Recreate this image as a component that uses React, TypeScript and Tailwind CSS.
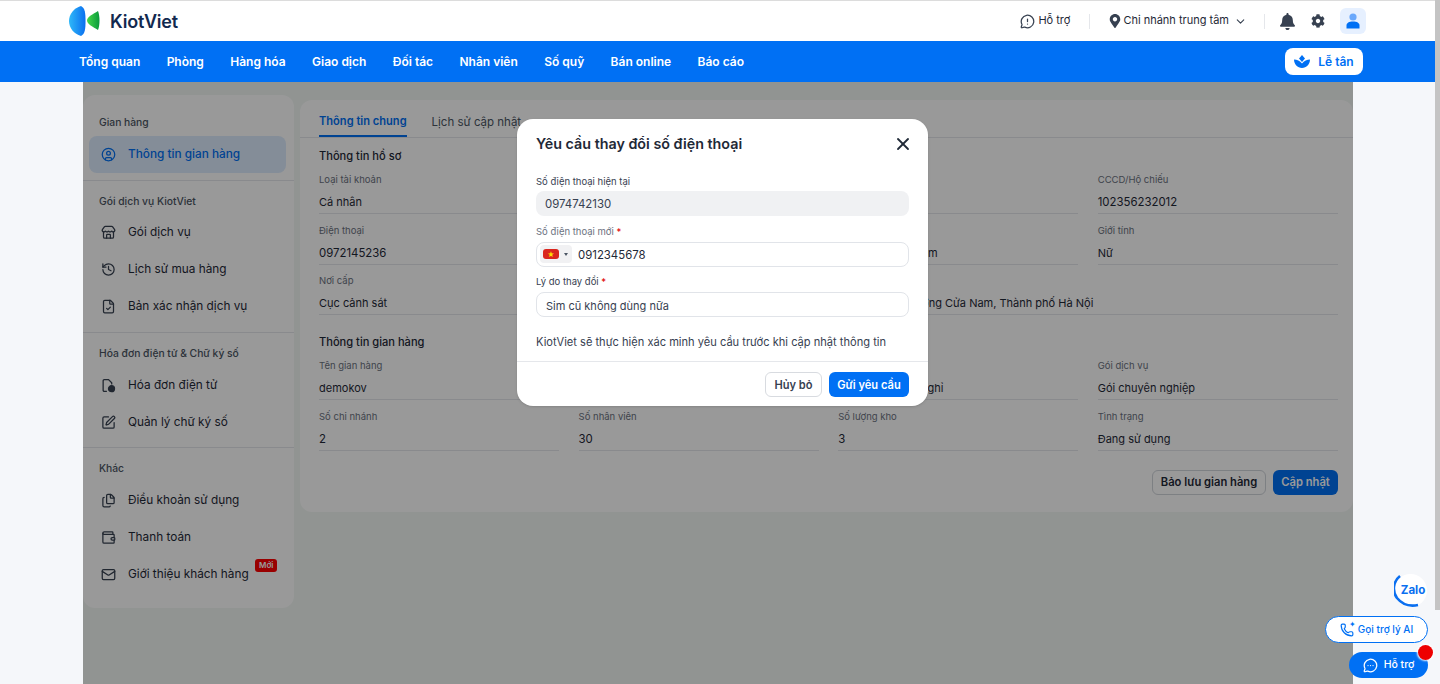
import React from "react";
import { CircleUser, Store, History, FileCheck, SquarePen, Files, Wallet, Mail, ChevronDown, X, Phone, MessageCircleMore, MessageCircleWarning } from "lucide-react";
import { FaBell, FaCog, FaMapMarkerAlt } from "react-icons/fa";

const font = { fontFamily: "Inter, 'Noto Sans', sans-serif" };

function Logo() {
  return (
    <svg width="34" height="32" viewBox="0 0 34 32" className="shrink-0">
      <defs>
        <linearGradient id="lb" x1="0" x2="1" y1="0" y2="0"><stop offset="0" stopColor="#2fb8f8" /><stop offset="1" stopColor="#0a6ff0" /></linearGradient>
        <linearGradient id="lg" x1="0" x2="1" y1="0" y2="0"><stop offset="0" stopColor="#45d84a" /><stop offset="1" stopColor="#0a9a3c" /></linearGradient>
      </defs>
      <path d="M12 1 C5 3 0 9 0 16 C0 23 5 29 12 31 C16 29 16.500 24 16.500 16 C16.500 8 16 3 12 1Z" fill="url(#lb)" />
      <path d="M29 6 C24 9 18 12 18 15.500 C18 19 24 22 29 25 C31 20 31 11 29 6Z" fill="url(#lg)" />
    </svg>
  );
}

function Lotus() {
  return (
    <svg width="16" height="13" viewBox="0 0 16 13" fill="#0070f4">
      <path d="M8 0 L11 3.500 L8 7 L5 3.500Z" />
      <path d="M0 4.500 C3 4.500 6 6 8 8.500 C10 6 13 4.500 16 4.500 C16 9 12.500 13 8 13 C3.500 13 0 9 0 4.500Z" />
    </svg>
  );
}

function SideItem({ icon, text, active, badge }: { icon: React.ReactNode; text: string; active?: boolean; badge?: boolean }) {
  return (
    <div className={`relative ml-[6px] mr-[8px] flex h-[37px] items-center gap-[14px] rounded-lg pl-[13px] text-[11.8px] ${active ? "bg-[#dcebfd] font-medium text-[#0070f4]" : "text-[#1f2937]"}`}>
      <span className="flex w-[12px] justify-center">{icon}</span>
      <span>{text}</span>
      {badge && <span className="absolute left-[166px] top-[3px] rounded-[3px] bg-[#ff0000] px-[4px] text-[8px] font-semibold leading-[13px] text-white">Mới</span>}
    </div>
  );
}

function Section({ title, className, children, last }: { title: string; className: string; children: React.ReactNode; last?: boolean }) {
  return (
    <div className={`${className} ${last ? "" : "border-b border-[#e5e7eb]"}`}>
      <div className="px-[16px] text-[10.3px] font-medium leading-4 text-[#4b5563]">{title}</div>
      {children}
    </div>
  );
}

function Field({ label, value, className }: { label?: string; value?: string; className?: string }) {
  const numeric = /^\d+$/.test(value ?? "");
  return (
    <div className={className}>
      <div className="h-4 text-[9.5px] leading-4 text-[#6b7280]">{label}</div>
      <div className={`h-[26px] whitespace-nowrap border-b border-[#e5e7eb] leading-[28px] text-[#1f2937] ${numeric ? "text-[11.4px]" : "text-[11px]"}`}>{value}</div>
    </div>
  );
}

const sz = "h-[15px] w-[15px] shrink-0 stroke-[#374151]";

export default function App() {
  return (
    <div style={font} className="relative flex h-[684px] w-[1440px] flex-col overflow-hidden bg-[#f5f7fa]">
      <header className="flex h-[41px] shrink-0 items-center border-t border-[#dcdcdc] bg-white pl-[69px] pr-[74px]">
        <Logo />
        <span className="ml-[7px] text-[18px] font-semibold tracking-[-0.2px] text-[#12294f]">KiotViet</span>
        <div className="ml-auto flex items-center text-[#1f2937]">
          <MessageCircleWarning className="h-[15px] w-[15px] stroke-[#374151]" />
          <span className="mb-[1px] ml-[3px] text-[11px]">Hỗ trợ</span>
          <span className="ml-[19px] h-[15px] w-px bg-[#e5e7eb]" />
          <FaMapMarkerAlt className="ml-[18px] h-[14px] w-[14px] text-[#374151]" />
          <span className="mb-[1px] ml-[1px] text-[11px]">Chi nhánh trung tâm</span>
          <ChevronDown className="ml-[5px] h-[13px] w-[13px] stroke-[#374151]" />
          <span className="ml-[17px] h-[15px] w-px bg-[#e5e7eb]" />
          <FaBell className="ml-[14px] h-[17px] w-[17px] text-[#374151]" />
          <FaCog className="ml-[15px] h-[14px] w-[14px] text-[#374151]" />
          <span className="ml-[15px] flex h-[26px] w-[26px] items-center justify-center rounded-md bg-[#e6f0ff]">
            <svg width="14" height="16" viewBox="0 0 14 16">
              <circle cx="7" cy="4" r="3.600" fill="#6aa8fb" />
              <path d="M0.500 15.500 V12.500 C0.500 10 3 8.500 7 8.500 C11 8.500 13.500 10 13.500 12.500 V15.500Z" fill="#0070f4" />
            </svg>
          </span>
        </div>
      </header>

      <nav className="flex h-[41px] shrink-0 items-center gap-[26.4px] bg-[#0070f4] pl-[79px] pr-[77px] text-[12px] font-semibold text-white">
        <span>Tổng quan</span>
        <span>Phòng</span>
        <span>Hàng hóa</span>
        <span>Giao dịch</span>
        <span>Đối tác</span>
        <span>Nhân viên</span>
        <span>Số quỹ</span>
        <span>Bán online</span>
        <span>Báo cáo</span>
        <button className="ml-auto flex h-[27px] w-[78px] items-center justify-center gap-[8px] rounded-lg bg-white text-[#0070f4]">
          <Lotus />
          <span>Lễ tân</span>
        </button>
      </nav>

      <main className="relative ml-[83px] flex w-[1270px] flex-1 items-start gap-[6px] bg-[#f2f7f4] pt-[13px]">
        <aside className="w-[211px] shrink-0 rounded-xl bg-white">
          <Section title="Gian hàng" className="pb-[7px] pt-[19px]">
            <div className="mt-[6px]">
              <SideItem active text="Thông tin gian hàng" icon={<CircleUser className="h-[15px] w-[15px] shrink-0 stroke-[#0070f4]" />} />
            </div>
          </Section>
          <Section title="Gói dịch vụ KiotViet" className="pb-[7px] pt-[12px]">
            <div className="mt-[5px]">
              <SideItem text="Gói dịch vụ" icon={<Store className={sz} />} />
              <SideItem text="Lịch sử mua hàng" icon={<History className={sz} />} />
              <SideItem text="Bản xác nhận dịch vụ" icon={<FileCheck className={sz} />} />
            </div>
          </Section>
          <Section title="Hóa đơn điện tử & Chữ ký số" className="pb-[6px] pt-[12px]">
            <div className="mt-[6px]">
              <SideItem text="Hóa đơn điện tử" icon={
                <svg width="15" height="15" viewBox="0 0 14 14" fill="none" stroke="#374151" strokeWidth="1.2" className="shrink-0">
                  <path d="M5.500 12.500H3a1 1 0 0 1-1-1v-9a1 1 0 0 1 1-1h4l3 3v1.500" />
                  <circle cx="9.800" cy="10" r="2.800" fill="#374151" />
                </svg>
              } />
              <SideItem text="Quản lý chữ ký số" icon={<SquarePen className={sz} />} />
            </div>
          </Section>
          <Section title="Khác" last className="pb-[15px] pt-[12px]">
            <div className="mt-[6px]">
              <SideItem text="Điều khoản sử dụng" icon={<Files className={sz} />} />
              <SideItem text="Thanh toán" icon={<Wallet className={sz} />} />
              <SideItem badge text="Giới thiệu khách hàng" icon={<Mail className={sz} />} />
            </div>
          </Section>
        </aside>

        <section className="mt-[5px] min-w-0 flex-1 rounded-xl bg-white pb-[17px]">
          <div className="flex h-[38px] items-end gap-[25px] border-b border-[#e5e7eb] pl-[19px]">
            <span className="flex h-[37px] items-center border-b-2 border-[#0070f4] pt-[8px] text-[11.1px] font-semibold text-[#0070f4]">Thông tin chung</span>
            <span className="flex h-[37px] items-center pt-[8px] text-[11.5px] text-[#4b5563]">Lịch sử cập nhật</span>
          </div>
          <div className="pl-[19px] pr-[15px]">
            <h3 className="mt-[10px] text-[11.1px] font-medium leading-4 text-[#1f2937]">Thông tin hồ sơ</h3>
            <div className="mt-[8px] grid grid-cols-4 gap-x-[19.3px] gap-y-[8.500px]">
              <Field label="Loại tài khoản" value="Cá nhân" />
              <Field />
              <Field />
              <Field label="CCCD/Hộ chiếu" value="102356232012" />
              <Field label="Điện thoại" value="0972145236" />
              <Field />
              <Field value="demok@gmail.com" />
              <Field label="Giới tính" value="Nữ" />
              <Field label="Nơi cấp" value="Cục cảnh sát" />
              <Field />
              <Field value="Hàng Bông, Phường Cửa Nam, Thành phố Hà Nội" className="col-span-2" />
            </div>
            <h3 className="mt-[19px] text-[11.1px] font-medium leading-4 text-[#1f2937]">Thông tin gian hàng</h3>
            <div className="mt-[8px] grid grid-cols-4 gap-x-[19.3px] gap-y-[8.500px]">
              <Field label="Tên gian hàng" value="demokov" />
              <Field />
              <Field value="Khách sạn, nhà nghỉ" />
              <Field label="Gói dịch vụ" value="Gói chuyên nghiệp" />
              <Field label="Số chi nhánh" value="2" />
              <Field label="Số nhân viên" value="30" />
              <Field label="Số lượng kho" value="3" />
              <Field label="Tình trạng" value="Đang sử dụng" />
            </div>
            <div className="mt-[19px] flex justify-end gap-[7px] text-[11.2px] font-semibold">
              <button className="h-[25px] w-[114px] rounded-md border border-[#d1d5db] pt-[1px] text-[#1f2937]">Bảo lưu gian hàng</button>
              <button className="h-[25px] w-[65px] rounded-md bg-[#0070f4] pt-[1px] text-white">Cập nhật</button>
            </div>
          </div>
        </section>

        <div className="absolute inset-0 bg-black/40" />

        <div className="absolute left-[434px] top-[37px] h-[287px] w-[411px] rounded-2xl bg-white shadow-sm">
          <div className="flex items-center justify-between pl-[19px] pr-[19px] pt-[13px]">
            <h2 className="text-[14.3px] font-semibold leading-6 text-[#1f2937]">Yêu cầu thay đổi số điện thoại</h2>
            <X className="mr-[-4px] h-[20px] w-[20px] stroke-[#1f2937]" strokeWidth={2.2} />
          </div>
          <div className="px-[19px]">
            <label className="mt-[18px] block text-[9.5px] leading-4 text-[#374151]">Số điện thoại hiện tại</label>
            <div className="mt-[1px] flex h-[25px] items-center rounded-lg bg-[#f0f1f3] px-[9px] pt-[3px] text-[11.4px] text-[#374151]">0974742130</div>
            <label className="mt-[8px] block text-[9.5px] leading-4 text-[#6b7280]">Số điện thoại mới <span className="text-[#e00000]">*</span></label>
            <div className="mt-[1.500px] flex h-[25px] items-center rounded-lg border border-[#e1e4e9] pl-[3px] text-[#1f2937]">
              <span className="flex h-[18px] w-[32px] items-center gap-[5px] rounded bg-[#f1f1f3] pl-[3px]">
                <span className="flex h-[10px] w-[16px] items-center justify-center rounded-[3px] bg-[#da251d] text-[7px] leading-none text-[#ffe000]">★</span>
                <span className="h-0 w-0 border-x-[2.500px] border-t-[3px] border-x-transparent border-t-[#4b5563]" />
              </span>
              <span className="ml-[6px] pt-[3px] text-[11.4px]">0912345678</span>
            </div>
            <label className="mt-[7.500px] block text-[9.5px] leading-4 text-[#374151]">Lý do thay đổi <span className="text-[#e00000]">*</span></label>
            <div className="mt-[2px] flex h-[25px] items-center rounded-lg border border-[#e1e4e9] px-[9px] pt-[3px] text-[11px] text-[#374151]">Sim cũ không dùng nữa</div>
            <p className="mt-[17px] whitespace-nowrap text-[11.1px] leading-4 text-[#374151]">KiotViet sẽ thực hiện xác minh yêu cầu trước khi cập nhật thông tin</p>
          </div>
          <div className="mt-[11px] flex justify-end gap-[7px] border-t border-[#e5e7eb] px-[19px] pt-[10px] text-[11.1px] font-semibold">
            <button className="h-[25px] w-[57px] rounded-md border border-[#d8dbe0] pt-[1px] text-[#374151]">Hủy bỏ</button>
            <button className="h-[25px] w-[80px] rounded-md bg-[#0070f4] pt-[1px] text-white">Gửi yêu cầu</button>
          </div>
        </div>
      </main>

      <div className="absolute right-0 top-0 h-[610px] w-[5px] bg-[#c4c4c4]" />

      <div className="absolute left-[1394px] top-[574px] flex h-[33px] w-[33px] items-center justify-center rounded-full bg-white">
        <svg className="absolute inset-0" width="33" height="33" viewBox="0 0 33 33" fill="none">
          <path d="M6 2 A16 16 0 0 0 3 24 C7 29 14 33 24 31" stroke="#0a6ff0" strokeWidth="2.600" />
        </svg>
        <span className="relative ml-[5px] text-[11.5px] font-bold leading-none text-[#0a6ff0]">Zalo</span>
      </div>
      <div className="absolute left-[1325px] top-[616px] flex h-[27px] w-[103px] items-center justify-center gap-[4px] rounded-full border border-[#0070f4] bg-white text-[10px] font-medium text-[#0070f4]">
        <span className="relative">
          <Phone className="h-[14px] w-[14px] stroke-[#0070f4]" />
          <span className="absolute left-[9px] top-[-3px] text-[8px] leading-none">✦</span>
        </span>
        <span>Gọi trợ lý AI</span>
      </div>
      <div className="absolute left-[1349px] top-[652px] flex h-[26px] w-[79px] items-center justify-center gap-[6px] rounded-full bg-[#0070f4] text-[10.500px] font-medium text-white">
        <MessageCircleMore className="h-[15px] w-[15px] stroke-white" />
        <span>Hỗ trợ</span>
      </div>
      <span className="absolute left-[1418px] top-[645px] h-[15px] w-[15px] rounded-full bg-[#ee0000] shadow-[0_0_2px_1px_#fff]" />
    </div>
  );
}
